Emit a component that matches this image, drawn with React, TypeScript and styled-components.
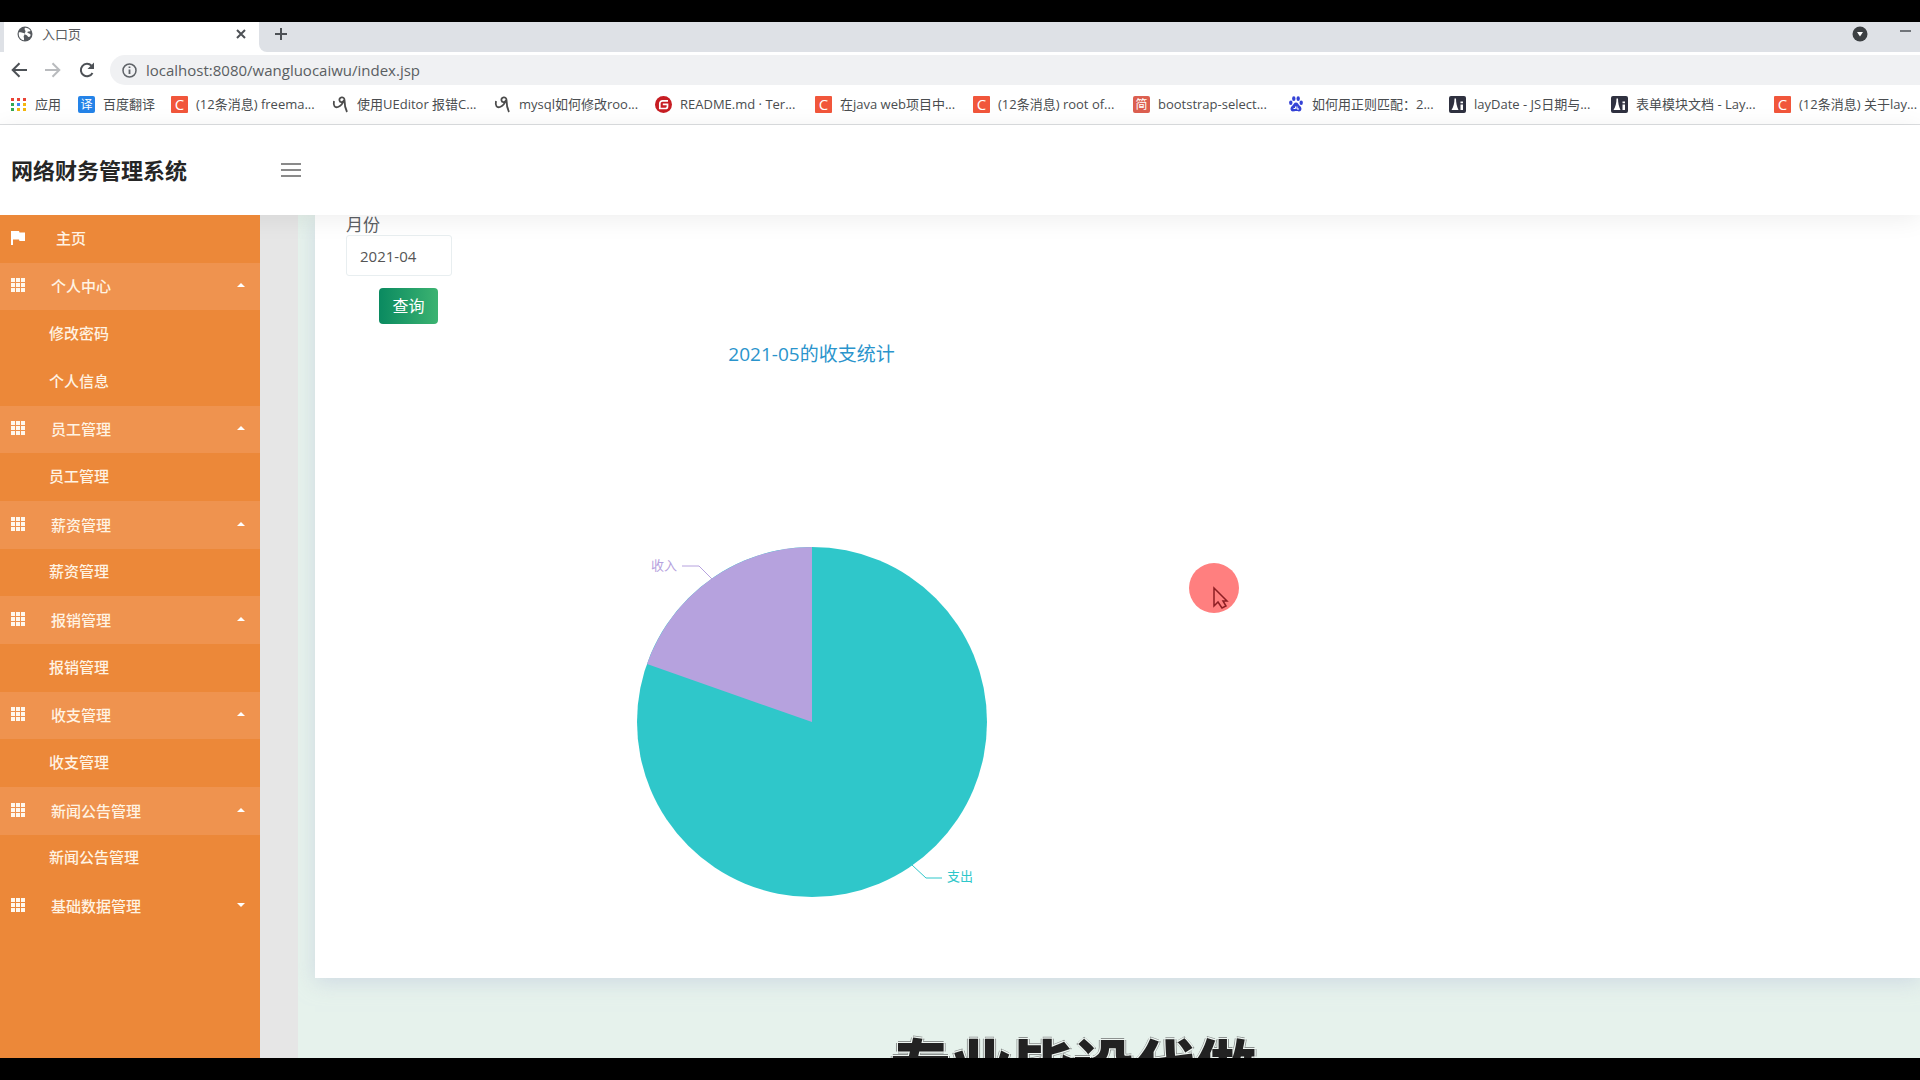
import React from "react";
import styled, { createGlobalStyle } from "styled-components";

const GlobalStyle = createGlobalStyle`
  *, *::before, *::after { box-sizing: border-box; }
  body {
    margin: 0;
    background: #000;
    color: #555;
    font-family: "Open Sans", "Noto Sans CJK SC", sans-serif;
  }
  button, input { font-family: inherit; }
  ul { list-style: none; margin: 0; padding: 0; }
  svg { display: block; flex: none; }
`;

const Screen = styled.div`
  display: flex;
  flex-direction: column;
  height: 100vh;
  padding: 22px 0;
  overflow: hidden;
  background: #000;
`;

/* ---------- browser chrome ---------- */

const TabStrip = styled.div`
  display: flex;
  flex: none;
  height: 30px;
  padding-left: 4px;
  background: #dee1e6;
`;

const Tab = styled.div`
  display: flex;
  align-items: center;
  width: 255px;
  height: 30px;
  padding: 0 10px 6px 13px;
  gap: 9px;
  background: #fff;
  font-size: 13px;
  line-height: 20px;
  color: #5a5d61;
`;

const TabTitle = styled.span`
  flex: 1;
`;

const StripRest = styled.div`
  display: flex;
  flex: 1;
  align-items: center;
  padding: 0 6px 6px 14px;
  background: #dee1e6;
  border-bottom-left-radius: 8px;
`;

const StripEdge = styled.div`
  display: flex;
  flex: 1;
  background: #fff;
`;

const Spacer = styled.span`
  flex: 1;
`;

const IconButton = styled.button`
  display: flex;
  align-items: center;
  justify-content: center;
  flex: none;
  width: 16px;
  height: 20px;
  padding: 0;
  border: 0;
  background: none;
  color: #4d5156;
`;

const WindowButtons = styled.div`
  display: flex;
  align-items: center;
  gap: 30px;
`;

const Toolbar = styled.form`
  display: flex;
  flex: none;
  align-items: center;
  height: 36px;
  padding: 0 0 0 11px;
  gap: 18px;
  background: #fff;
`;

const Omnibox = styled.label`
  display: flex;
  flex: 1;
  align-items: center;
  height: 30px;
  margin-left: -3px;
  padding-left: 12px;
  gap: 9px;
  border-radius: 15px 0 0 15px;
  background: #f0f1f3;
  color: #5f6368;
`;

const AddressInput = styled.input`
  flex: 1;
  padding: 0;
  border: 0;
  outline: 0;
  background: none;
  color: #5a5e62;
  font-size: 15px;
  line-height: 24px;
`;

const Bookmarks = styled.nav`
  display: flex;
  flex: none;
  align-items: center;
  height: 37px;
  padding: 0 0 4px 10px;
  overflow: hidden;
  border-bottom: 1px solid #dcdee0;
  background: #fff;
`;

const Bookmark = styled.a<{ $width: number }>`
  display: flex;
  flex: none;
  align-items: center;
  width: ${(p) => p.$width}px;
  gap: 8px;
  color: #4a4d50;
  font-size: 13px;
  line-height: 20px;
  text-decoration: none;
  white-space: nowrap;
`;

/* ---------- application ---------- */

const Header = styled.header`
  position: relative;
  z-index: 1;
  display: flex;
  flex: none;
  align-items: center;
  height: 90px;
  padding-left: 11px;
  background: #fff;
  box-shadow: 0 4px 24px rgba(0, 0, 0, 0.07);
`;

const Brand = styled.h1`
  width: 270px;
  margin: 0;
  color: #262626;
  font-size: 22px;
  font-weight: 700;
  line-height: 32px;
`;

const MenuToggle = styled.button`
  display: flex;
  flex-direction: column;
  justify-content: space-between;
  width: 20px;
  height: 14px;
  padding: 0;
  border: 0;
  background: none;
`;

const MenuBar = styled.span`
  width: 20px;
  height: 2px;
  background: #8a8a8a;
`;

const Workspace = styled.div`
  display: flex;
  flex: 1;
  min-height: 0;
  overflow: hidden;
  background: #e6e6e6;
`;

const Sidebar = styled.aside`
  position: relative;
  z-index: 2;
  flex: none;
  width: 260px;
  background: #ec8839;
`;

const Menu = styled.ul`
  display: grid;
  grid-auto-rows: 1fr;
  min-height: 715px;
`;

const MenuGroup = styled.li`
  display: contents;
`;

const SubMenu = styled.ul`
  display: contents;
`;

const SubItem = styled.li`
  display: flex;
`;

const GroupButton = styled.button<{ $open: boolean }>`
  display: flex;
  align-items: center;
  padding: 0 15px 2px 11px;
  gap: 26px;
  border: 0;
  background: ${(p) => (p.$open ? "#ef934f" : "transparent")};
  color: #fff3e3;
  font-size: 15px;
  font-weight: 500;
  line-height: 20px;
  text-align: left;
`;

const GroupLabel = styled.span`
  flex: 1;
  padding-top: 2px;
`;

const MenuLink = styled.a<{ $indent: number }>`
  display: flex;
  flex: 1;
  align-items: center;
  padding: 0 0 2px ${(p) => p.$indent}px;
  gap: 31px;
  color: #fff3e3;
  font-size: 15px;
  font-weight: 500;
  line-height: 20px;
  text-decoration: none;
`;

const Content = styled.main`
  position: relative;
  flex: 1;
  min-width: 0;
  margin-left: 38px;
  padding-left: 17px;
  overflow: hidden;
  background: #e6f2ec;
`;

const Card = styled.section`
  padding: 0 31px 1px;
  background: #fff;
  box-shadow: 0 4px 20px rgba(190, 200, 220, 0.6);
`;

const Filter = styled.form`
  display: flex;
  flex-direction: column;
  align-items: flex-start;
`;

const FilterLabel = styled.label`
  font-size: 17px;
  line-height: 20px;
  color: #5c6064;
`;

const MonthInput = styled.input`
  width: 106px;
  height: 41px;
  padding: 0 13px;
  border: 1px solid #e8eef0;
  border-radius: 3px;
  outline: 0;
  background: #fff;
  color: #555;
  font-size: 15px;
`;

const QueryButton = styled.button`
  width: 59px;
  height: 36px;
  margin: 12px 0 0 33px;
  padding: 0;
  border: 0;
  border-radius: 4px;
  background: linear-gradient(90deg, #0a8a60, #3cb371);
  color: #fff;
  font-size: 16px;
  line-height: 24px;
`;

const Chart = styled.figure`
  width: 931px;
  margin: 16px 0 0;
`;

const ChartTitle = styled.figcaption`
  color: #2a94cc;
  font-size: 19px;
  line-height: 28px;
  text-align: center;
`;

const SliceLabel = styled.text`
  font-size: 13px;
`;

const Watermark = styled.p`
  position: absolute;
  top: 817px;
  left: 592px;
  margin: 0;
  color: #222;
  font-size: 61px;
  font-weight: 900;
  line-height: 72px;
  white-space: nowrap;
  text-shadow:
    1px 1px #eef5f1, -1px 1px #eef5f1, 1px -1px #eef5f1, -1px -1px #eef5f1,
    2px 0 #8d9290, -2px 0 #8d9290, 0 2px #8d9290, 0 -2px #8d9290;
`;

const Pointer = styled.svg`
  position: absolute;
  top: 347px;
  left: 890px;
`;

/* ---------- icons ---------- */

const Globe = () => (
  <svg width="16" height="16" viewBox="0 0 16 16">
    <circle cx="8" cy="8" r="7.500" fill="#55595e" />
    <path d="M1.800 6.500c1.500-.8 3 .3 4.700.5 1.500.2 1.500 1.500.5 2.500s.5 2 0 4.700c-3.500-.5-5.700-3.500-5.200-7.700z" fill="#fff" />
    <path d="M8 1.800c2.500 0 4.500 1.200 5.600 3.200-1 .8-2 0-3 .8-.8.700.8 1.700 2 1.900 1 .2 1.200 1.500.6 2.500-.8 1.200-2.200 1-2.700-.2-.4-1-1.800-.9-2.600-1.800-.9-1 .6-1.700.6-2.700S6.800 3 8 1.800z" fill="#fff" />
  </svg>
);

const Stroke = ({ d, size = 16, color = "currentColor", width = 2 }: { d: string; size?: number; color?: string; width?: number }) => (
  <svg width={size} height={size} viewBox="0 0 16 16" fill="none" stroke={color} strokeWidth={width}>
    <path d={d} />
  </svg>
);

const Reload = () => (
  <svg width="16" height="16" viewBox="0 0 16 16">
    <path d="M13.500 11A6.200 6.200 0 1 1 12.500 3.700" fill="none" stroke="#4d5156" strokeWidth="2" />
    <path d="M15 .5v6.500H8.500z" fill="#4d5156" />
  </svg>
);

const Info = () => (
  <svg width="15" height="15" viewBox="0 0 15 15" fill="none" stroke="#5f6368" strokeWidth="1.500">
    <circle cx="7.500" cy="7.500" r="6.500" />
    <path d="M7.500 6.500v4.500M7.500 3.500v1.500" strokeWidth="1.800" />
  </svg>
);

const AppsIcon = () => {
  const colors = ["#ea4335", "#ea4335", "#ea4335", "#34a853", "#4285f4", "#f5b60d", "#34a853", "#f5b60d", "#f5b60d"];
  return (
    <svg width="17" height="17" viewBox="0 0 17 17">
      {colors.map((c, i) => (
        <rect key={i} x={1 + (i % 3) * 6} y={2 + Math.floor(i / 3) * 5} width="3" height="3" fill={c} />
      ))}
    </svg>
  );
};

const Badge = styled.span<{ $color: string; $radius: number; $size: number }>`
  display: flex;
  flex: none;
  align-items: center;
  justify-content: center;
  width: 17px;
  height: 17px;
  border-radius: ${(p) => p.$radius}px;
  background: ${(p) => p.$color};
  color: #fff;
  font-size: ${(p) => p.$size}px;
  line-height: 17px;
`;

const Knot = () => (
  <svg width="17" height="17" viewBox="0 0 17 17" fill="none" stroke="#4c4c4c">
    <path d="M2 5c-1 5 1 7 4 6 3-1 5-4 6-7" strokeWidth="1.800" />
    <path d="M12.500 4c0-4-6-3-5 .5.500 2.500 4 2 5-.5 0 4 .5 8 2.500 12" strokeWidth="1.800" />
  </svg>
);

const Gitee = () => (
  <svg width="17" height="17" viewBox="0 0 17 17">
    <circle cx="8.500" cy="8.500" r="8.500" fill="#c71d23" />
    <path d="M13 4.800H7.500a2.700 2.700 0 0 0-2.700 2.700v5h5.700a2 2 0 0 0 2-2V8.300H7.800" fill="none" stroke="#fff" strokeWidth="1.700" />
  </svg>
);

const Paw = () => (
  <svg width="16" height="16" viewBox="-1 0 16 16" fill="#3442d6">
    <ellipse cx="1.800" cy="6.800" rx="1.700" ry="2.200" />
    <ellipse cx="4.800" cy="2.700" rx="1.700" ry="2.400" />
    <ellipse cx="9.200" cy="2.700" rx="1.700" ry="2.400" />
    <ellipse cx="12.200" cy="6.800" rx="1.700" ry="2.200" />
    <path d="M7 6.500c2 0 2.500 2.200 4 3.500 2.500 2 1.500 5.500-1 5.500-1.300 0-2-.4-3-.4s-1.700.4-3 .4c-2.500 0-3.500-3.500-1-5.500C4.500 8.700 5 6.500 7 6.500z" />
    <path d="M4.500 12.500h2v-2M8 10.500v2.500h2" stroke="#fff" fill="none" />
  </svg>
);

const Lay = () => (
  <svg width="17" height="17" viewBox="0 0 17 17">
    <rect width="17" height="17" rx="2" fill="#2f3140" />
    <path d="M5.500 2.500h1.500c0 4 .8 8 2.500 11.500h-7c2-3 3-7 3-11.500zM11.500 8.500H14V14h-2.500zM11.500 5.500H14v1.800h-2.500z" fill="#fff" />
  </svg>
);

const Flag = () => (
  <svg width="14" height="16" viewBox="0 0 14 16" fill="#fff">
    <path d="M0 1h8l.5 1.500H14v8.500H8.500L8 9.500H2V15H0z" />
  </svg>
);

const GridIcon = () => (
  <svg width="14" height="14" viewBox="0 0 14 14" fill="#fff8ee">
    {[0, 1, 2].map((r) => [0, 1, 2].map((c) => <rect key={`${r}${c}`} x={c * 5} y={r * 5} width="4" height="4" />))}
  </svg>
);

const Caret = ({ open }: { open: boolean }) => (
  <svg width="8" height="4" viewBox="0 0 8 4" fill="#fff">
    <path d={open ? "M0 4l4-4 4 4z" : "M0 0l4 4 4-4z"} />
  </svg>
);

/* ---------- data ---------- */

const csdn = <Badge $color="#f1563b" $radius={1} $size={15}>C</Badge>;

const bookmarks = [
  { icon: <AppsIcon />, text: "应用", width: 68 },
  { icon: <Badge $color="#2483e8" $radius={2} $size={12}>译</Badge>, text: "百度翻译", width: 93 },
  { icon: csdn, text: "(12条消息) freema...", width: 161 },
  { icon: <Knot />, text: "使用UEditor 报错C...", width: 162 },
  { icon: <Knot />, text: "mysql如何修改roo...", width: 161 },
  { icon: <Gitee />, text: "README.md · Ter...", width: 160 },
  { icon: csdn, text: "在java web项目中...", width: 158 },
  { icon: csdn, text: "(12条消息) root of...", width: 160 },
  { icon: <Badge $color="#dc5f50" $radius={2} $size={12}>简</Badge>, text: "bootstrap-select...", width: 155 },
  { icon: <Paw />, text: "如何用正则匹配：2...", width: 161 },
  { icon: <Lay />, text: "layDate - JS日期与...", width: 162 },
  { icon: <Lay />, text: "表单模块文档 - Lay...", width: 163 },
  { icon: csdn, text: "(12条消息) 关于lay...", width: 161 },
];

const groups = [
  { title: "个人中心", items: ["修改密码", "个人信息"] },
  { title: "员工管理", items: ["员工管理"] },
  { title: "薪资管理", items: ["薪资管理"] },
  { title: "报销管理", items: ["报销管理"] },
  { title: "收支管理", items: ["收支管理"] },
  { title: "新闻公告管理", items: ["新闻公告管理"] },
  { title: "基础数据管理", items: [] as string[] },
];

export default function App() {
  return (
    <Screen>
      <GlobalStyle />
      <TabStrip>
        <Tab>
          <Globe />
          <TabTitle>入口页</TabTitle>
          <IconButton aria-label="关闭标签页">
            <Stroke d="M4 4l8 8M12 4l-8 8" />
          </IconButton>
        </Tab>
        <StripEdge>
          <StripRest>
            <IconButton aria-label="新标签页">
              <Stroke d="M8 2v12M2 8h12" />
            </IconButton>
            <Spacer />
            <WindowButtons>
              <IconButton aria-label="搜索标签页">
                <svg width="16" height="16" viewBox="0 0 16 16">
                  <circle cx="8" cy="8" r="7.500" fill="#3c4043" />
                  <path d="M5 6h6l-3 4.500z" fill="#fff" />
                </svg>
              </IconButton>
              <IconButton aria-label="最小化">
                <Stroke d="M2 5h11" width={1.5} />
              </IconButton>
            </WindowButtons>
          </StripRest>
        </StripEdge>
      </TabStrip>

      <Toolbar onSubmit={(e) => e.preventDefault()}>
        <IconButton type="button" aria-label="后退">
          <Stroke d="M16 8H2M8.500 1.200L1.700 8l6.800 6.800" />
        </IconButton>
        <IconButton type="button" aria-label="前进">
          <Stroke d="M0 8h14M7.500 1.200L14.300 8l-6.800 6.800" color="#b9bbbe" />
        </IconButton>
        <IconButton type="button" aria-label="重新加载">
          <Reload />
        </IconButton>
        <Omnibox>
          <Info />
          <AddressInput aria-label="地址" defaultValue="localhost:8080/wangluocaiwu/index.jsp" />
        </Omnibox>
      </Toolbar>

      <Bookmarks>
        {bookmarks.map((b, i) => (
          <Bookmark key={i} href="#" $width={b.width}>
            {b.icon}
            {b.text}
          </Bookmark>
        ))}
      </Bookmarks>

      <Header>
        <Brand>网络财务管理系统</Brand>
        <MenuToggle aria-label="切换菜单">
          <MenuBar />
          <MenuBar />
          <MenuBar />
        </MenuToggle>
      </Header>

      <Workspace>
        <Sidebar>
          <Menu>
            <SubItem>
              <MenuLink href="#" $indent={11}>
                <Flag />
                主页
              </MenuLink>
            </SubItem>
            {groups.map((g) => (
              <MenuGroup key={g.title}>
                <GroupButton $open={g.items.length > 0}>
                  <GridIcon />
                  <GroupLabel>{g.title}</GroupLabel>
                  <Caret open={g.items.length > 0} />
                </GroupButton>
                <SubMenu>
                  {g.items.map((item) => (
                    <SubItem key={item}>
                      <MenuLink href="#" $indent={49}>{item}</MenuLink>
                    </SubItem>
                  ))}
                </SubMenu>
              </MenuGroup>
            ))}
          </Menu>
        </Sidebar>

        <Content>
          <Card>
            <Filter onSubmit={(e) => e.preventDefault()}>
              <FilterLabel htmlFor="month">月份</FilterLabel>
              <MonthInput id="month" defaultValue="2021-04" />
              <QueryButton>查询</QueryButton>
            </Filter>
            <Chart>
              <ChartTitle>2021-05的收支统计</ChartTitle>
              <svg width="931" height="609" viewBox="0 0 931 609">
                <circle cx="466" cy="354" r="175" fill="#2fc7ca" />
                <path d="M466 354V179A175 175 0 0 0 301 296z" fill="#b6a2de" />
                <path d="M336 198h17l13 13" fill="none" stroke="#b6a2de" />
                <path d="M566 497l14 13h16" fill="none" stroke="#2fc7ca" />
                <SliceLabel x="305" y="202" fill="#b6a2de">收入</SliceLabel>
                <SliceLabel x="601" y="513" fill="#2fc7ca">支出</SliceLabel>
              </svg>
            </Chart>
          </Card>
          <Watermark>专业毕设代做</Watermark>
          <Pointer width="52" height="52" viewBox="0 0 52 52">
            <circle cx="26" cy="26" r="25" fill="#ff7f7f" />
            <path d="M26 26v18l4-4 4 6 4-2-3-5h4z" fill="none" stroke="#8d1f24" strokeWidth="1.500" />
          </Pointer>
        </Content>
      </Workspace>
    </Screen>
  );
}
